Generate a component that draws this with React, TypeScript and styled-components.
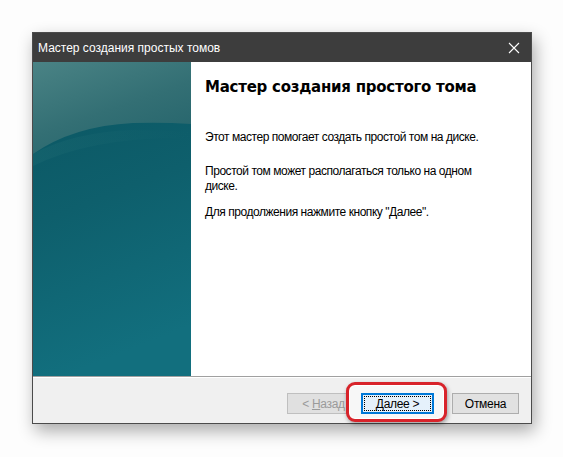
import * as React from "react";
import styled, { createGlobalStyle } from "styled-components";

const GlobalStyle = createGlobalStyle`
  html, body {
    margin: 0;
    padding: 0;
    background: #fdfdfd;
  }
  body {
    font-family: "Liberation Sans", Arial, sans-serif;
  }
  * {
    box-sizing: border-box;
  }
`;

const Page = styled.section`
  width: 563px;
  height: 457px;
  padding: 32px 0 0 32px;
`;

const Window = styled.div`
  width: 500px;
  height: 392px;
  border: 1px solid #4b4b4b;
  background: #ffffff;
  display: flex;
  flex-direction: column;
  box-shadow: 3px 7px 16px rgba(0, 0, 0, 0.33);
`;

const TitleBar = styled.header`
  height: 29px;
  flex: none;
  background: #3d3d3d;
  display: flex;
  align-items: center;
  justify-content: space-between;
  padding: 0 11px 0 5px;
  color: #ffffff;
  font-size: 12px;
`;

const CloseIcon = () => (
  <svg width="12" height="12" viewBox="0 0 12 12">
    <path d="M1 1 L11 11 M11 1 L1 11" stroke="#ffffff" strokeWidth="1.1" fill="none" />
  </svg>
);

const Body = styled.div`
  flex: 1;
  display: flex;
  min-height: 0;
`;

const SidePanel = styled.div`
  width: 158px;
  flex: none;
  display: flex;
  overflow: hidden;
  svg {
    display: block;
  }
`;

const Content = styled.div`
  flex: 1;
  padding: 15px 20px 0 14px;
  color: #000000;
`;

const Heading = styled.h1`
  margin: 0 0 33px 0;
  font-family: "DejaVu Sans", Verdana, sans-serif;
  font-weight: bold;
  font-size: 15px;
  line-height: 20px;
  letter-spacing: -0.25px;
`;

const Paragraph = styled.p<{ $gap?: number }>`
  margin: ${(p) => p.$gap ?? 0}px 0 0 0;
  max-width: 290px;
  font-size: 12px;
  line-height: 15px;
  letter-spacing: -0.45px;
`;

const Footer = styled.footer`
  height: 47px;
  flex: none;
  background: #f0f0f0;
  border-top: 1px solid #a0a0a0;
  box-shadow: inset 0 1px 0 #ffffff;
  display: flex;
  justify-content: flex-end;
  align-items: flex-start;
  padding: 16px 12px 0 0;
`;

const ButtonPair = styled.div`
  display: flex;
  gap: 1px;
  margin-right: 18px;
`;

const Button = styled.button<{ width?: number }>`
  width: ${(p) => p.width ?? 73}px;
  height: 21px;
  padding: 0;
  background: #e1e1e1;
  border: 1px solid #adadad;
  font-family: "Liberation Sans", Arial, sans-serif;
  font-size: 12px;
  letter-spacing: -0.3px;
  color: #000000;
  line-height: 18px;
  position: relative;
  u {
    text-decoration: underline;
    text-underline-offset: 1px;
  }
  &:disabled {
    border-color: #bfbfbf;
    color: #9a9a9a;
    background: #e0e0e0;
  }
`;

const DefaultButton = styled(Button)`
  border: 1px solid #0078d7;
  box-shadow: inset 0 0 0 1px #0078d7;
  background: #e5f1fb;
  &::after {
    content: "";
    position: absolute;
    inset: 2px;
    border: 1px dotted #000000;
  }
`;

const Highlight = styled.span`
  position: relative;
  z-index: 0;
  display: inline-flex;
  &::before {
    content: "";
    position: absolute;
    z-index: -1;
    top: -11px;
    bottom: -8px;
    left: -15px;
    right: -13px;
    border: 3px solid #d8232a;
    border-radius: 9px;
    background: #f7f7f7;
    box-shadow: inset 0 0 0 1px #ffffff, 1px 2px 4px rgba(0, 0, 0, 0.35);
  }
`;

const SideArt = () => (
  <svg width="158" height="314" viewBox="0 0 158 314">
    <defs>
      <linearGradient id="lower" x1="0" y1="0" x2="0.2" y2="1">
        <stop offset="0" stopColor="#0a5561" />
        <stop offset="0.5" stopColor="#0e5f6c" />
        <stop offset="1" stopColor="#126f7e" />
      </linearGradient>
      <linearGradient id="upper" x1="0" y1="0" x2="0.6" y2="1">
        <stop offset="0" stopColor="#4a8385" />
        <stop offset="0.6" stopColor="#336f74" />
        <stop offset="1" stopColor="#27666d" />
      </linearGradient>
      <linearGradient id="band" x1="0" y1="0" x2="1" y2="0">
        <stop offset="0" stopColor="#1d6a72" stopOpacity="0.8" />
        <stop offset="1" stopColor="#1d6a72" stopOpacity="0" />
      </linearGradient>
    </defs>
    <rect x="0" y="0" width="158" height="314" fill="url(#lower)" />
    <path d="M0 92 Q40 70 100 68 Q130 68 158 70 L158 76 Q60 74 0 104 Z" fill="url(#band)" opacity="0.5" />
    <path d="M0 0 H158 V62 Q130 60 100 61 Q40 64 0 92 Z" fill="url(#upper)" />
  </svg>
);

export default function App() {
  return (
    <Page>
      <GlobalStyle />
      <Window>
        <TitleBar>
          <span>Мастер создания простых томов</span>
          <CloseIcon />
        </TitleBar>
        <Body>
          <SidePanel>
            <SideArt />
          </SidePanel>
          <Content>
            <Heading>Мастер создания простого тома</Heading>
            <Paragraph>Этот мастер помогает создать простой том на диске.</Paragraph>
            <Paragraph $gap={19}>Простой том может располагаться только на одном диске.</Paragraph>
            <Paragraph $gap={11}>Для продолжения нажмите кнопку "Далее".</Paragraph>
          </Content>
        </Body>
        <Footer>
          <ButtonPair>
            <Button disabled>
              &lt; <u>Н</u>азад
            </Button>
            <Highlight>
              <DefaultButton>
                <u>Д</u>алее &gt;
              </DefaultButton>
            </Highlight>
          </ButtonPair>
          <Button width={67}>Отмена</Button>
        </Footer>
      </Window>
    </Page>
  );
}
